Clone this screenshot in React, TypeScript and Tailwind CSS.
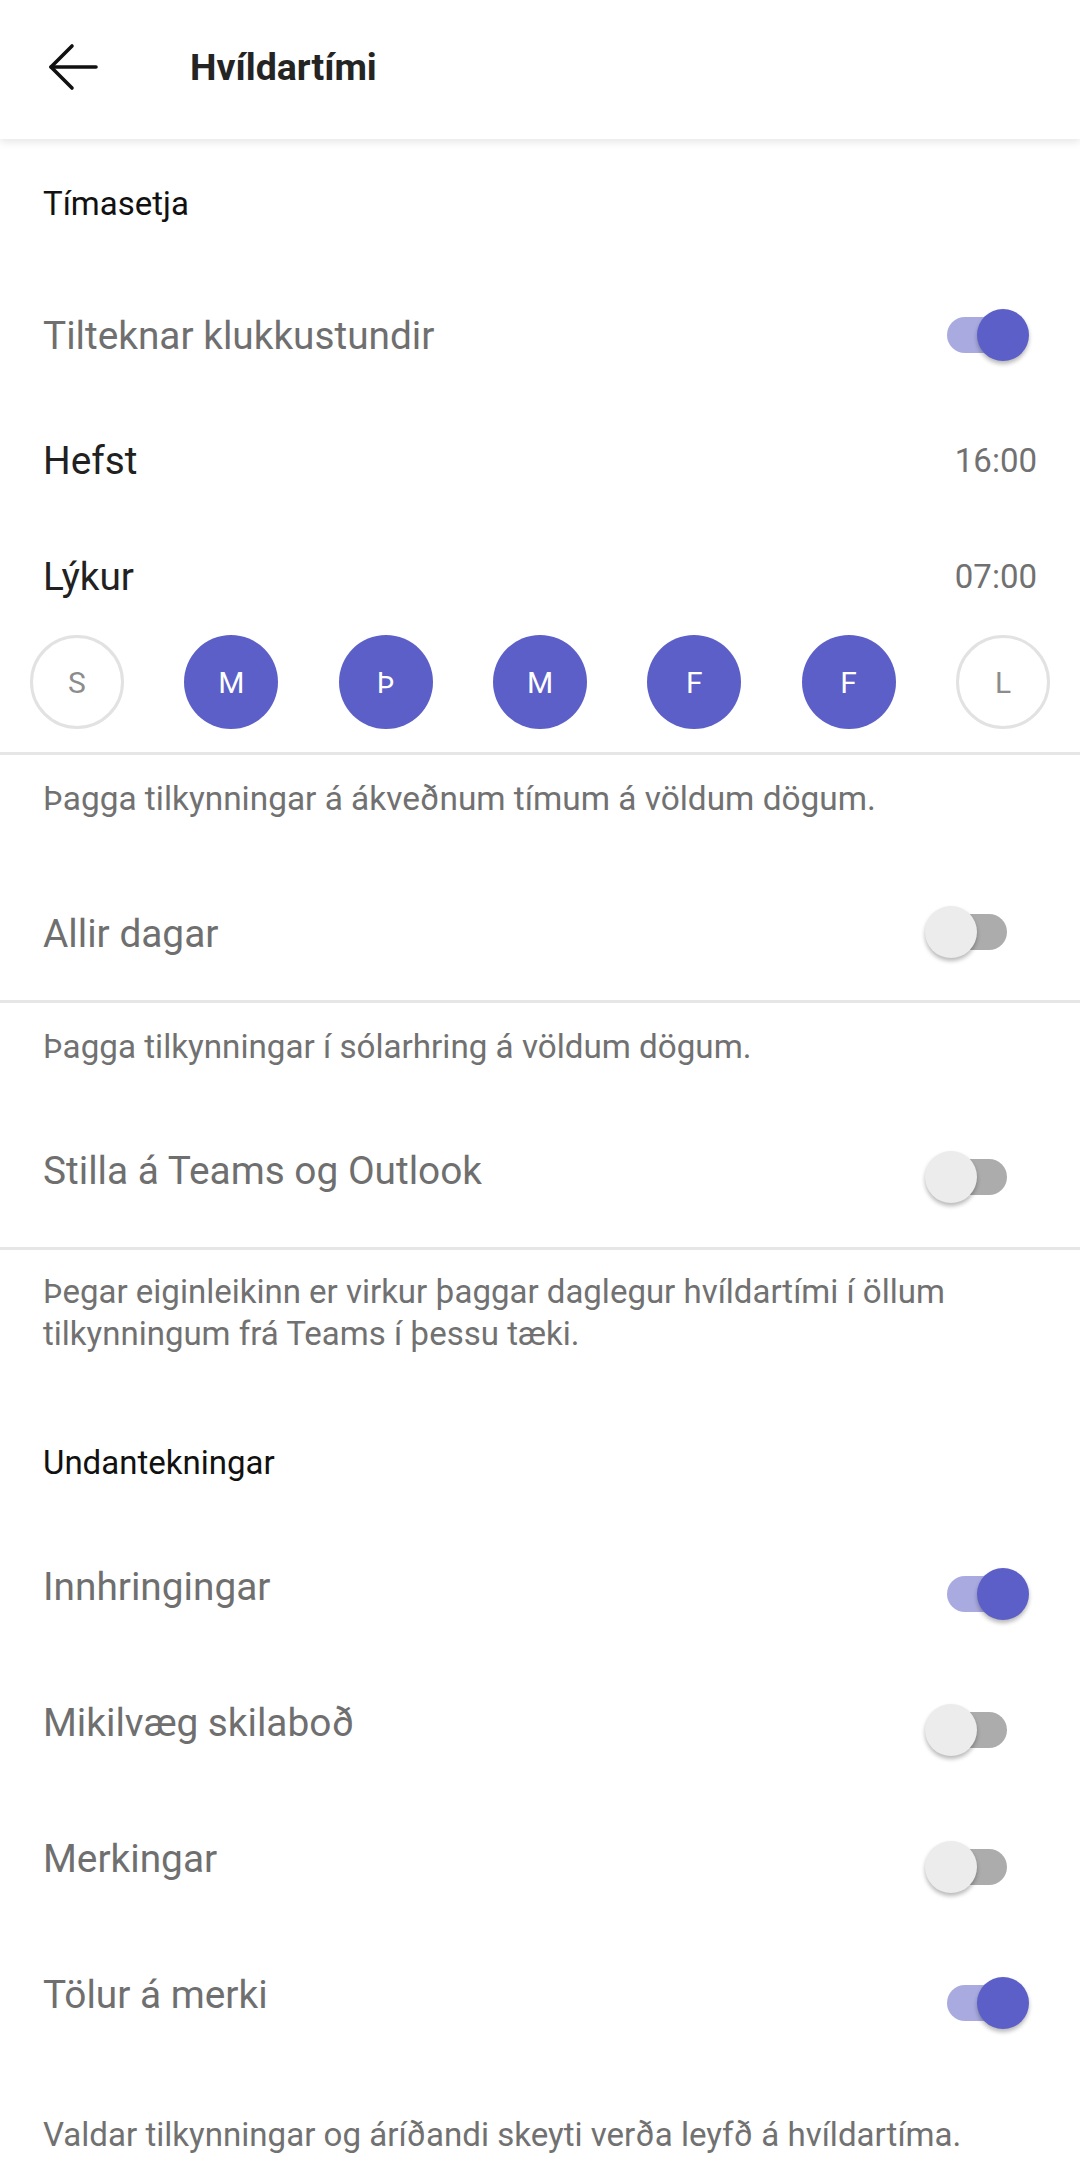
import React from "react"

const font = { fontFamily: "Roboto, 'Noto Sans', sans-serif" }

const Toggle = ({ on, offset = 0 }: { on: boolean; offset?: number }) => (
  <div className="relative w-[104px] h-[56px] mr-[8px]" style={{ marginTop: offset }}>
    <div
      className={`absolute left-[22px] top-[10px] w-[60px] h-[36px] rounded-full ${on ? "bg-[#a9abe0]" : "bg-[#acacac]"}`}
    />
    <div
      className={`absolute top-[2px] w-[52px] h-[52px] rounded-full shadow-[0_3px_4px_rgba(0,0,0,0.28)] ${
        on ? "left-[52px] bg-[#5b5fc7]" : "left-0 bg-[#ececec]"
      }`}
    />
  </div>
)

const ToggleRow = ({
  label,
  on,
  height,
  textShift = 0,
  toggleShift = 0,
}: {
  label: string
  on: boolean
  height: number
  textShift?: number
  toggleShift?: number
}) => (
  <div className="flex items-center justify-between pl-[43px] pr-[43px]" style={{ height }}>
    <span className="text-[38.8px] leading-[48px] text-[#6f6f6f]" style={{ marginTop: textShift }}>
      {label}
    </span>
    <Toggle on={on} offset={toggleShift} />
  </div>
)

const TimeRow = ({ label, value }: { label: string; value: string }) => (
  <div className="flex items-center justify-between h-[116px] px-[43px]">
    <span className="text-[38.8px] leading-[48px] text-[#212121]">{label}</span>
    <span className="text-[33px] leading-[42px] text-[#717171]">{value}</span>
  </div>
)

const Divider = () => <div className="h-[3px] bg-[#e6e6e6]" />

const days = [
  { d: "S", on: false },
  { d: "M", on: true },
  { d: "Þ", on: true },
  { d: "M", on: true },
  { d: "F", on: true },
  { d: "F", on: true },
  { d: "L", on: false },
]

export default function App() {
  return (
    <div className="w-[1080px] min-h-[2160px] bg-white overflow-hidden" style={font}>
      {/* Header */}
      <div className="relative z-10 flex items-center h-[139px] bg-white shadow-[0_3px_8px_rgba(0,0,0,0.10)]">
        <svg
          className="ml-[47px] mt-[-6px]"
          width="52"
          height="48"
          viewBox="0 0 52 48"
          fill="none"
          stroke="#111"
          strokeWidth="3.6"
          strokeLinecap="round"
          strokeLinejoin="round"
        >
          <path d="M4 24H49" />
          <path d="M25 3L4 24L25 45" />
        </svg>
        <h1 className="ml-[91px] mt-[-6px] text-[37.5px] leading-[48px] font-bold text-[#242424]">Hvíldartími</h1>
      </div>

      {/* Tímasetja */}
      <div className="flex items-center h-[130px] px-[43px]">
        <span className="text-[33px] leading-[42px] text-[#111]">Tímasetja</span>
      </div>
      <ToggleRow label="Tilteknar klukkustundir" on height={134} textShift={0} toggleShift={-2} />
      <TimeRow label="Hefst" value="16:00" />
      <TimeRow label="Lýkur" value="07:00" />

      <div className="flex justify-between px-[30px] pb-[23px]">
        {days.map((x, i) => (
          <div
            key={i}
            className={`flex items-center justify-center w-[94px] h-[94px] rounded-full text-[30px] ${
              x.on ? "bg-[#5b5fc7] text-white" : "border-[3px] border-[#e2e2e2] text-[#8c8c8c]"
            }`}
          >
            {x.d}
          </div>
        ))}
      </div>
      <Divider />

      <div className="px-[43px] pt-[23px] pb-[46px]">
        <p className="text-[33.4px] leading-[42px] text-[#717171]">Þagga tilkynningar á ákveðnum tímum á völdum dögum.</p>
      </div>
      <ToggleRow label="Allir dagar" on={false} height={134} textShift={2} toggleShift={-2} />
      <Divider />

      <div className="px-[43px] pt-[23px] pb-[32px]">
        <p className="text-[33.2px] leading-[42px] text-[#717171]">Þagga tilkynningar í sólarhring á völdum dögum.</p>
      </div>
      <ToggleRow label="Stilla á Teams og Outlook" on={false} height={147} textShift={-6} toggleShift={6} />
      <Divider />

      <div className="px-[43px] pt-[21px]">
        <p className="text-[33px] leading-[42px] text-[#717171]">
          Þegar eiginleikinn er virkur þaggar daglegur hvíldartími í öllum tilkynningum frá Teams í þessu tæki.
        </p>
      </div>

      <div className="px-[43px] pt-[87px] pb-[39px]">
        <span className="text-[33px] leading-[42px] text-[#111]">Undantekningar</span>
      </div>
      <ToggleRow label="Innhringingar" on height={136} textShift={-8} toggleShift={6} />
      <ToggleRow label="Mikilvæg skilaboð" on={false} height={136} textShift={-8} toggleShift={6} />
      <ToggleRow label="Merkingar" on={false} height={136} textShift={-8} toggleShift={8} />
      <ToggleRow label="Tölur á merki" on height={136} textShift={-8} toggleShift={8} />

      <div className="px-[43px] pt-[47px]">
        <p className="text-[33.1px] leading-[42px] text-[#717171]">Valdar tilkynningar og áríðandi skeyti verða leyfð á hvíldartíma.</p>
      </div>
    </div>
  )
}
